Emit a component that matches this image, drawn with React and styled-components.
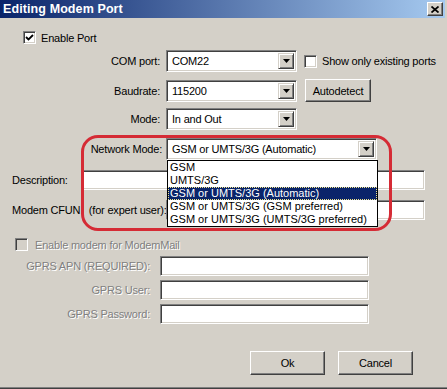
import React from "react";
import styled, { createGlobalStyle } from "styled-components";

const Global = createGlobalStyle`
  html, body { margin: 0; padding: 0; background: #d4d0c8; }
  body { font-family: "Liberation Sans", Arial, sans-serif; font-size: 11px; color: #000; letter-spacing: -0.2px; }
  * { box-sizing: border-box; }
`;

const Window = styled.div`
  width: 447px;
  height: 389px;
  background: #d4d0c8;
  display: flex;
  flex-direction: column;
  border-bottom: 1px solid #404040;
  box-shadow: inset 0 -1px 0 #808080;
  overflow: hidden;
`;

const TitleBar = styled.div`
  height: 18px;
  margin-right: 2px;
  background: linear-gradient(to right, #0a246a, #a6caf0);
  display: flex;
  align-items: center;
  justify-content: space-between;
  padding: 0 2px 0 3px;
`;

const Title = styled.span`
  color: #fff;
  font-weight: bold;
  font-size: 12.5px;
  letter-spacing: 0.1px;
`;

const CloseButton = styled.div`
  width: 16px;
  height: 14px;
  background: #d4d0c8;
  border: 1px solid;
  border-color: #fff #404040 #404040 #fff;
  box-shadow: inset -1px -1px 0 #808080;
  display: flex;
  align-items: center;
  justify-content: center;
`;

const Body = styled.div`
  position: relative;
  flex: 1;
  display: flex;
  flex-direction: column;
`;

const Row = styled.div`
  display: flex;
  align-items: center;
  margin-top: ${(p) => p.$top || 0}px;
  padding-left: ${(p) => p.$left || 0}px;
  height: ${(p) => p.$h || 20}px;
`;

const Label = styled.span`
  width: ${(p) => p.$w}px;
  flex: none;
  text-align: ${(p) => (p.$right ? "right" : "left")};
  padding-right: ${(p) => (p.$right ? p.$pad || 6 : 0)}px;
  white-space: pre;
  color: ${(p) => (p.$disabled ? "#808080" : "#000")};
  text-shadow: ${(p) => (p.$disabled ? "1px 1px 0 #fff" : "none")};
`;

const Sunken = styled.div`
  width: ${(p) => p.$w}px;
  height: ${(p) => p.$h || 20}px;
  flex: none;
  background: #fff;
  border: 1px solid;
  border-color: #808080 #fff #fff #808080;
  box-shadow: inset 1px 1px 0 #404040, inset -1px -1px 0 #d4d0c8;
`;

const Combo = styled(Sunken)`
  display: flex;
  align-items: stretch;
  padding: 2px;
`;

const ComboValue = styled.span`
  flex: 1;
  padding-left: 3px;
  display: flex;
  align-items: center;
  white-space: nowrap;
`;

const DropButton = styled.div`
  width: 16px;
  flex: none;
  background: #d4d0c8;
  border: 1px solid;
  border-color: #d4d0c8 #404040 #404040 #d4d0c8;
  box-shadow: inset 1px 1px 0 #fff, inset -1px -1px 0 #808080;
  display: flex;
  align-items: center;
  justify-content: center;
`;

const Box = styled.div`
  width: 13px;
  height: 13px;
  flex: none;
  background: ${(p) => (p.$disabled ? "#d4d0c8" : "#fff")};
  border: 1px solid;
  border-color: #808080 #fff #fff #808080;
  box-shadow: inset 1px 1px 0 #404040, inset -1px -1px 0 #d4d0c8;
  display: flex;
  align-items: center;
  justify-content: center;
  margin-left: ${(p) => p.$ml || 0}px;
  margin-right: ${(p) => p.$gap || 5}px;
`;

const Button = styled.div`
  width: ${(p) => p.$w}px;
  height: ${(p) => p.$h}px;
  flex: none;
  background: #d4d0c8;
  border: 1px solid;
  border-color: #fff #404040 #404040 #fff;
  box-shadow: inset -1px -1px 0 #808080;
  display: flex;
  align-items: center;
  justify-content: center;
  margin-left: ${(p) => p.$ml || 0}px;
`;

const ButtonRow = styled.div`
  display: flex;
  justify-content: flex-end;
  padding-right: 34px;
  margin-top: 27px;
`;

const Highlight = styled.div`
  position: absolute;
  left: 81px;
  top: 117px;
  width: 311px;
  height: 96px;
  border: 3px solid #d52b35;
  border-radius: 17px;
  pointer-events: none;
`;

const DropList = styled.div`
  position: absolute;
  left: 167px;
  top: 142px;
  width: 211px;
  background: #fff;
  border: 1px solid #000;
  display: flex;
  flex-direction: column;
  letter-spacing: 0;
`;

const Item = styled.div`
  height: 13px;
  line-height: 13px;
  padding-left: 2px;
  white-space: nowrap;
  background: ${(p) => (p.$sel ? "#0a246a" : "#fff")};
  color: ${(p) => (p.$sel ? "#fff" : "#000")};
  outline: ${(p) => (p.$sel ? "1px dotted #f0e68c" : "none")};
  outline-offset: -1px;
`;

const Arrow = () => (
  <svg width="7" height="4" viewBox="0 0 7 4">
    <path d="M0 0H7L3.5 4Z" fill="#000" />
  </svg>
);

const Check = () => (
  <svg width="9" height="9" viewBox="0 0 9 9">
    <path d="M1 4L3.5 6.5L8 2" fill="none" stroke="#000" strokeWidth="1.8" />
  </svg>
);

const ComboBox = ({ w, value }) => (
  <Combo $w={w} $h={22}>
    <ComboValue>{value}</ComboValue>
    <DropButton>
      <Arrow />
    </DropButton>
  </Combo>
);

const items = [
  "GSM",
  "UMTS/3G",
  "GSM or UMTS/3G (Automatic)",
  "GSM or UMTS/3G (GSM preferred)",
  "GSM or UMTS/3G (UMTS/3G preferred)",
];

export default function App() {
  return (
    <>
      <Global />
      <Window>
        <TitleBar>
          <Title>Editing Modem Port</Title>
          <CloseButton>
            <svg width="8" height="7" viewBox="0 0 8 7">
              <path d="M0.5 0.5L7.5 6.5M7.5 0.5L0.5 6.5" stroke="#000" strokeWidth="1.7" />
            </svg>
          </CloseButton>
        </TitleBar>
        <Body>
          <Row $top={13} $left={23} $h={13}>
            <Box>
              <Check />
            </Box>
            <span>Enable Port</span>
          </Row>
          <Row $top={6} $h={22}>
            <Label $w={166} $right>COM port:</Label>
            <ComboBox w={131} value="COM22" />
            <Box $ml={7} />
            <span>Show only existing ports</span>
          </Row>
          <Row $top={7} $h={23}>
            <Label $w={166} $right>Baudrate:</Label>
            <ComboBox w={131} value="115200" />
            <Button $w={66} $h={23} $ml={8}>Autodetect</Button>
          </Row>
          <Row $top={6} $h={22}>
            <Label $w={166} $right>Mode:</Label>
            <ComboBox w={131} value="In and Out" />
          </Row>
          <Row $top={8} $h={22}>
            <Label $w={166} $right $pad={4}>Network Mode:</Label>
            <ComboBox w={211} value="GSM or UMTS/3G (Automatic)" />
          </Row>
          <Row $top={10} $left={12} $h={20}>
            <Label $w={70}>Description:</Label>
            <Sunken $w={343} />
          </Row>
          <Row $top={10} $left={12} $h={20}>
            <Label $w={154}>{"Modem CFUN   (for expert user):"}</Label>
            <Sunken $w={259} />
          </Row>
          <Row $top={18} $left={15} $h={13}>
            <Box $disabled $gap={7} />
            <Label $disabled>Enable modem for ModemMail</Label>
          </Row>
          <Row $top={5} $h={20}>
            <Label $w={160} $right $pad={10} $disabled>GPRS APN (REQUIRED):</Label>
            <Sunken $w={209} />
          </Row>
          <Row $top={4} $h={20}>
            <Label $w={160} $right $pad={10} $disabled>GPRS User:</Label>
            <Sunken $w={209} />
          </Row>
          <Row $top={4} $h={20}>
            <Label $w={160} $right $pad={10} $disabled>GPRS Password:</Label>
            <Sunken $w={209} />
          </Row>
          <ButtonRow>
            <Button $w={75} $h={24}>Ok</Button>
            <Button $w={75} $h={24} $ml={13}>Cancel</Button>
          </ButtonRow>
          <Highlight />
          <DropList>
            {items.map((t, i) => (
              <Item key={t} $sel={i === 2}>{t}</Item>
            ))}
          </DropList>
        </Body>
      </Window>
    </>
  );
}
